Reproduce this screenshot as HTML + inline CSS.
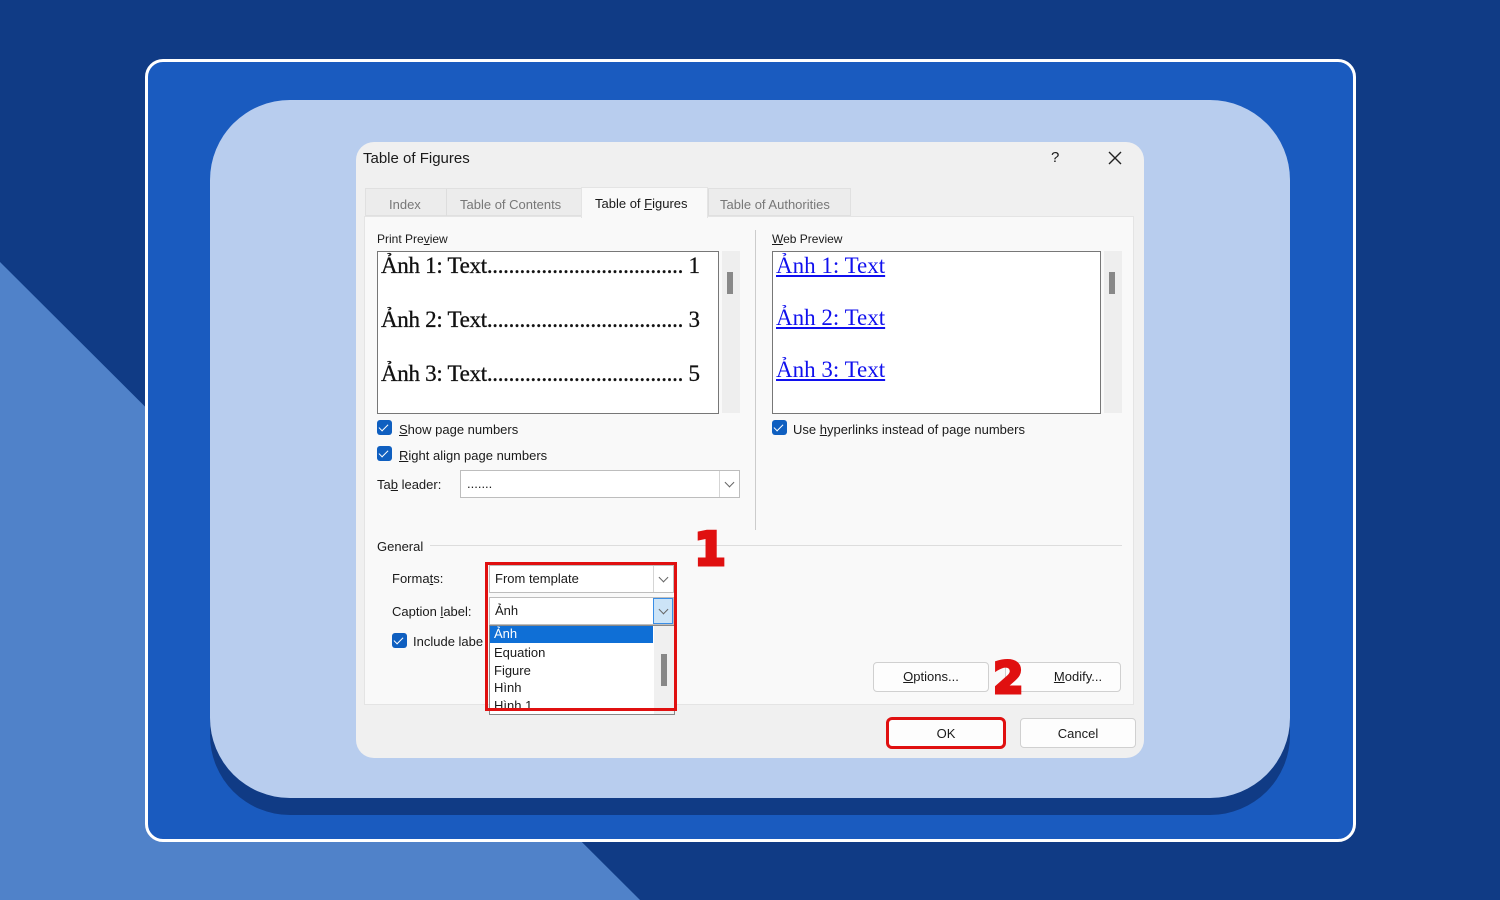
<!DOCTYPE html>
<html><head><meta charset="utf-8"><style>
*{margin:0;padding:0;box-sizing:border-box}
body{width:1500px;height:900px;overflow:hidden;background:#103b85;position:relative;font-family:"Liberation Sans","DejaVu Sans",sans-serif;font-size:13px;color:#1a1a1a}
.a{position:absolute}
.chk{position:absolute;width:15px;height:15px;background:#0f5fc0;border-radius:3px}
.chk:after{content:"";position:absolute;left:4px;top:2px;width:4px;height:8px;border:solid #fff;border-width:0 1.6px 1.6px 0;transform:rotate(45deg)}
.serif{font-family:"Liberation Serif",serif;font-size:23px;color:#111;-webkit-text-stroke:0.3px #111}
.link{font-family:"Liberation Serif",serif;font-size:23px;color:#1010ee;text-decoration:underline}
.btn{position:absolute;background:#fdfdfd;border:1px solid #d0d0d0;border-radius:4px;text-align:center;font-size:13px}
.dd{position:absolute;background:#fff;border:1px solid #bdbdbd}
.arrow{position:absolute;right:0;top:0;bottom:0;width:20px;border-left:1px solid #d5d5d5}
.arrow:after{content:"";position:absolute;left:6px;top:50%;margin-top:-5px;width:6px;height:6px;border:solid #666;border-width:0 1px 1px 0;transform:rotate(45deg)}
.mark{position:absolute;font-family:"DejaVu Sans",sans-serif;font-weight:bold;color:#e01010;-webkit-text-stroke:3px #e01010;line-height:50px}
u{text-decoration:underline}
</style></head><body>
<svg class="a" style="left:0;top:0" width="1500" height="900"><polygon points="0,262 640,900 0,900" fill="#5082c9"/></svg>
<div class="a" style="left:145px;top:59px;width:1211px;height:783px;background:#1a5bbf;border:3px solid #fff;border-radius:18px"></div>
<div class="a" style="left:210px;top:115px;width:1080px;height:700px;background:#103b85;border-radius:80px"></div>
<div class="a" style="left:210px;top:100px;width:1080px;height:698px;background:#b8cdee;border-radius:80px"></div>
<!-- dialog -->
<div class="a" style="left:356px;top:142px;width:788px;height:616px;background:#f0f0f0;border-radius:18px"></div>
<div class="a" style="left:363px;top:150px;font-size:15px">Table of Figures</div>
<div class="a" style="left:1051px;top:149px;font-size:15px">?</div>
<svg class="a" style="left:1108px;top:151px" width="14" height="14"><path d="M1 1L13 13M13 1L1 13" stroke="#222" stroke-width="1.4"/></svg>
<!-- tabs -->
<div class="a" style="left:365px;top:188px;width:486px;height:28px;background:#ececec;border:1px solid #e0e0e0"></div>
<div class="a" style="left:446px;top:189px;width:1px;height:27px;background:#ddd"></div>
<div class="a" style="left:389px;top:197px;color:#777">Index</div>
<div class="a" style="left:460px;top:197px;color:#777">Table of Contents</div>
<div class="a" style="left:720px;top:197px;color:#777">Table of Authorities</div>
<div class="a" style="left:708px;top:189px;width:1px;height:27px;background:#ddd"></div>
<div class="a" style="left:364px;top:216px;width:770px;height:489px;background:#f9f9f9;border:1px solid #e4e4e4"></div>
<div class="a" style="left:581px;top:187px;width:127px;height:31px;background:#f9f9f9;border:1px solid #e4e4e4;border-bottom:none"></div>
<div class="a" style="left:595px;top:196px">Table of <u>F</u>igures</div>
<!-- print preview -->
<div class="a" style="left:377px;top:232px;font-size:12px">Print Pre<u>v</u>iew</div>
<div class="a" style="left:722px;top:251px;width:18px;height:162px;background:#eeeeee"></div>
<div class="a" style="left:727px;top:272px;width:6px;height:22px;background:#888"></div>
<div class="a" style="left:377px;top:251px;width:342px;height:163px;background:#fff;border:1px solid #777"></div>
<div class="a serif" style="left:381px;top:253px;letter-spacing:-0.3px">Ảnh 1: Text....................................&nbsp;1</div>
<div class="a serif" style="left:381px;top:307px;letter-spacing:-0.3px">Ảnh 2: Text....................................&nbsp;3</div>
<div class="a serif" style="left:381px;top:361px;letter-spacing:-0.3px">Ảnh 3: Text....................................&nbsp;5</div>
<div class="chk" style="left:377px;top:420px"></div><div class="a" style="left:399px;top:422px"><u>S</u>how page numbers</div>
<div class="chk" style="left:377px;top:446px"></div><div class="a" style="left:399px;top:448px"><u>R</u>ight align page numbers</div>
<div class="a" style="left:377px;top:477px">Ta<u>b</u> leader:</div>
<div class="dd" style="left:460px;top:470px;width:280px;height:28px"><span class="a" style="left:6px;top:5px">.......</span><div class="arrow"></div></div>
<div class="a" style="left:755px;top:230px;width:1px;height:300px;background:#ccc"></div>
<!-- web preview -->
<div class="a" style="left:772px;top:232px;font-size:12px"><u>W</u>eb Preview</div>
<div class="a" style="left:1104px;top:251px;width:18px;height:162px;background:#eeeeee"></div>
<div class="a" style="left:1109px;top:272px;width:6px;height:22px;background:#888"></div>
<div class="a" style="left:772px;top:251px;width:329px;height:163px;background:#fff;border:1px solid #777"></div>
<div class="a link" style="left:776px;top:253px">Ảnh 1: Text</div>
<div class="a link" style="left:776px;top:305px">Ảnh 2: Text</div>
<div class="a link" style="left:776px;top:357px">Ảnh 3: Text</div>
<div class="chk" style="left:772px;top:420px"></div><div class="a" style="left:793px;top:422px">Use <u>h</u>yperlinks instead of page numbers</div>
<!-- general -->
<div class="a" style="left:377px;top:539px">General</div>
<div class="a" style="left:430px;top:545px;width:692px;height:1px;background:#ddd"></div>
<div class="a" style="left:392px;top:571px">Forma<u>t</u>s:</div>
<div class="a" style="left:392px;top:604px">Caption <u>l</u>abel:</div>
<div class="chk" style="left:392px;top:633px"></div><div class="a" style="left:413px;top:634px">Include labe</div>
<div class="dd" style="left:489px;top:565px;width:185px;height:28px"><span class="a" style="left:5px;top:5px">From template</span><div class="arrow"></div></div>
<div class="dd" style="left:489px;top:597px;width:185px;height:28px"><span class="a" style="left:5px;top:5px">Ảnh</span><div class="arrow" style="background:#cce4f7;border:1px solid #3a8ee6"></div></div>
<div class="a" style="left:489px;top:625px;width:186px;height:90px;background:#fff;border:1px solid #888;overflow:hidden">
<div class="a" style="left:0;top:0;width:163px;height:17px;background:#0f6fd6;color:#fff;padding-left:4px">Ảnh</div>
<div class="a" style="left:4px;top:19px">Equation</div>
<div class="a" style="left:4px;top:37px">Figure</div>
<div class="a" style="left:4px;top:54px">Hình</div>
<div class="a" style="left:4px;top:72px">Hình 1</div>
<div class="a" style="left:164px;top:0;width:20px;height:90px;background:#f0f0f0"></div>
<div class="a" style="left:171px;top:28px;width:6px;height:32px;background:#888"></div>
</div>
<div class="a" style="left:485px;top:562px;width:192px;height:149px;border:3px solid #e01010"></div>
<div class="mark" style="left:694px;top:524px;font-size:46px">1</div>
<div class="btn" style="left:873px;top:662px;width:116px;height:30px;line-height:28px"><u>O</u>ptions...</div>
<div class="btn" style="left:1005px;top:662px;width:116px;height:30px;line-height:28px;padding-left:30px"><u>M</u>odify...</div>
<div class="mark" style="left:993px;top:654px;font-size:44px">2</div>
<div class="btn" style="left:886px;top:717px;width:120px;height:32px;line-height:28px;border:3px solid #e01010;border-radius:6px">OK</div>
<div class="btn" style="left:1020px;top:718px;width:116px;height:30px;line-height:29px">Cancel</div>
</body></html>
